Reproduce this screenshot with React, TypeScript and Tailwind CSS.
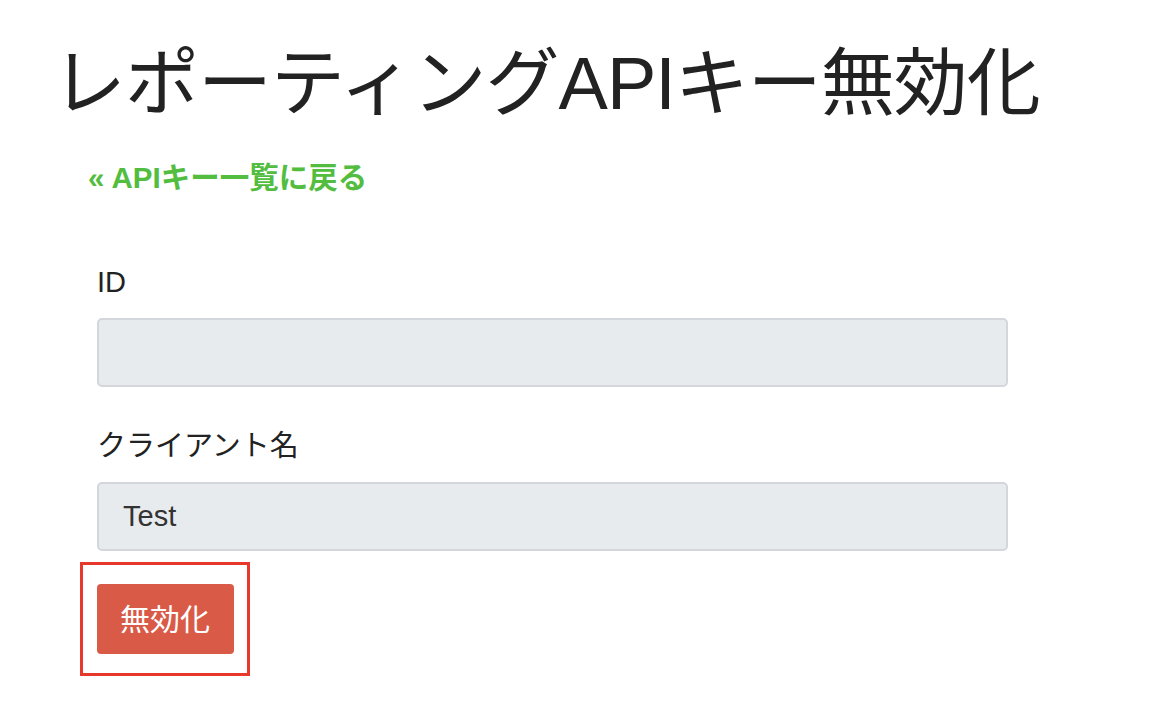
const FONT = "font-['Liberation_Sans','Noto_Sans_CJK_JP',sans-serif]";

const Field = ({ label, value }: { label: string; value: string }) => (
  <div className="flex flex-col">
    <label className="text-[29px] leading-[40px] text-[#222]">{label}</label>
    <div className="mt-[16px] h-[69px] w-[911px] rounded-[5px] border-2 border-[#d3d7db] bg-[#e8ebee] px-[24px] flex items-center text-[29px] text-[#333]">
      {value}
    </div>
  </div>
);

export default function App() {
  return (
    <div className={`${FONT} min-h-[726px] w-[1166px] bg-white`}>
      <h1 className="pl-[52px] pt-[40px] text-[74px] leading-[88px] font-normal text-[#222] tracking-[-1px]">
        レポーティングAPIキー無効化
      </h1>
      <a href="#" className="ml-[88px] mt-[30px] block w-fit text-[29.5px] leading-[40px] font-semibold text-[#52bd3f]">
        « APIキー一覧に戻る
      </a>
      <div className="ml-[97px] mt-[64px] flex flex-col gap-[39px]">
        <Field label="ID" value="" />
        <Field label="クライアント名" value="Test" />
      </div>
      <div className="ml-[80px] mt-[11px] w-[170px] h-[114px] border-[3px] border-[#e8372b] flex items-center justify-center">
        <button className="w-[137px] h-[70px] rounded-[4px] bg-[#d95a47] text-white text-[30px]">
          無効化
        </button>
      </div>
    </div>
  );
}
